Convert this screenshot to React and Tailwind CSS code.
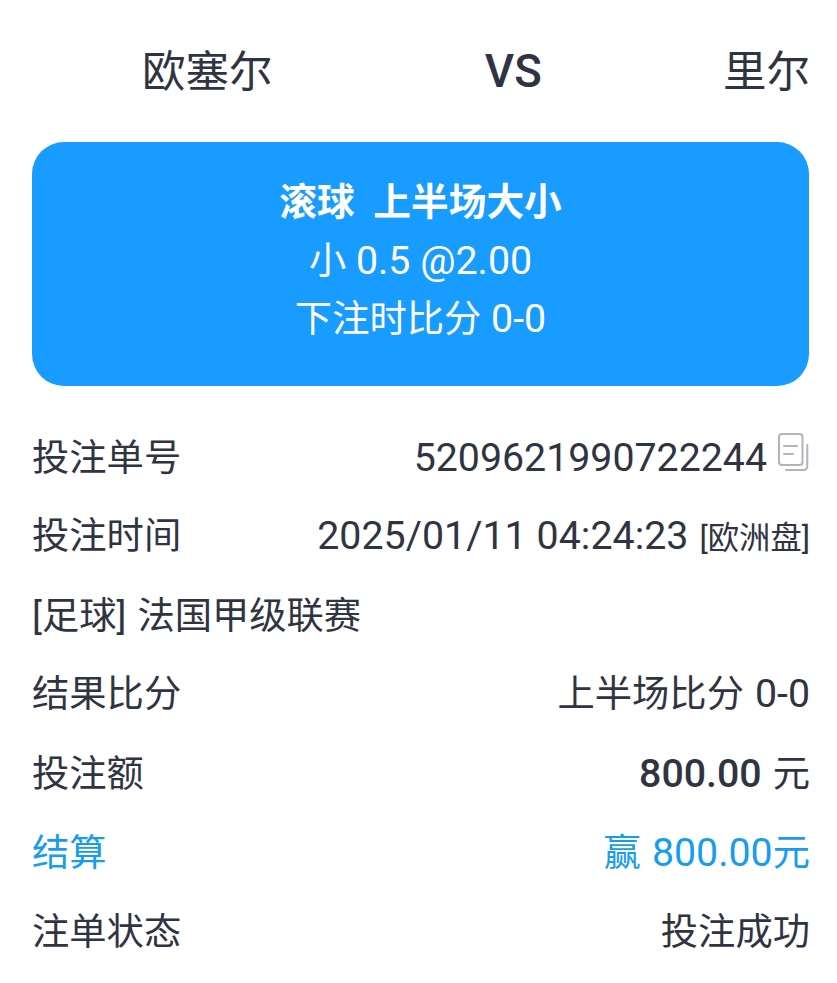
const font = "font-[Roboto,'Noto_Sans_CJK_SC',sans-serif]";

function CopyIcon() {
  return (
    <svg className="ml-[10px] mr-px h-[40px] w-[32px] shrink-0 -translate-y-[7px]" viewBox="0 0 32 40" fill="none" stroke="#b2b4bb" strokeWidth="2" strokeLinecap="round">
      <rect x="2" y="2" width="23.5" height="31" rx="3" />
      <path d="M7 14H20M7 22H16M30.3 13V34Q30.3 38 26.3 38H9" />
    </svg>
  );
}

function Num({ children, className = "" }) {
  return <span className={`text-[39.3px] ${className}`}>{children}</span>;
}

function Row({ label, children, className = "h-[79px]" }) {
  return (
    <div className={`flex items-center whitespace-nowrap leading-[79px] ${className}`}>
      <div className="flex w-full items-baseline justify-between">
        <span>{label}</span>
        <span className="flex items-baseline">{children}</span>
      </div>
    </div>
  );
}

export default function App() {
  return (
    <main className={`h-[983px] w-[837px] overflow-hidden bg-white pl-8 pr-[27px] text-[37.3px] text-[#303442] ${font}`}>
      <header className="flex h-[142px] items-center justify-between pt-[3px] pl-[110px] text-[43.5px] whitespace-nowrap">
        <span>欧塞尔</span>
        <span className="ml-[31px] text-[45.5px] font-medium">VS</span>
        <span>里尔</span>
      </header>
      <section className="mr-px flex h-[244px] flex-col items-center rounded-[32px] bg-[#189cff] pt-[31px] leading-[59px] text-white whitespace-pre">
        <div className="h-[59px] text-[37.7px] font-bold">滚球  上半场大小</div>
        <div className="h-[59px]">小<Num> 0.5 @2.00</Num></div>
        <div className="-mt-px h-[59px]">下注时比分<Num> 0-0</Num></div>
      </section>
      <section className="pt-[33px]">
        <Row label="投注单号">
          <Num>5209621990722244</Num>
          <span className="self-center"><CopyIcon /></span>
        </Row>
        <Row label="投注时间">
          <Num className="tracking-[0.05px]">2025/01/11 04:24:23</Num>
          <span className="ml-[11px] text-[31.3px]">[欧洲盘]</span>
        </Row>
        <Row label={<>[足球]<span className="ml-[11px]">法国甲级联赛</span></>} className="h-[78px]" />
        <Row label="结果比分">上半场比分<Num className="ml-[11px]">0-0</Num></Row>
        <Row label="投注额" className="h-[80px]"><Num className="font-medium">800.00</Num><span className="ml-[11px]">元</span></Row>
        <Row label="结算" className="h-[79px] text-[#189ced]">赢<Num className="ml-[11px]">800.00</Num>元</Row>
        <Row label="注单状态">投注成功</Row>
      </section>
    </main>
  );
}
